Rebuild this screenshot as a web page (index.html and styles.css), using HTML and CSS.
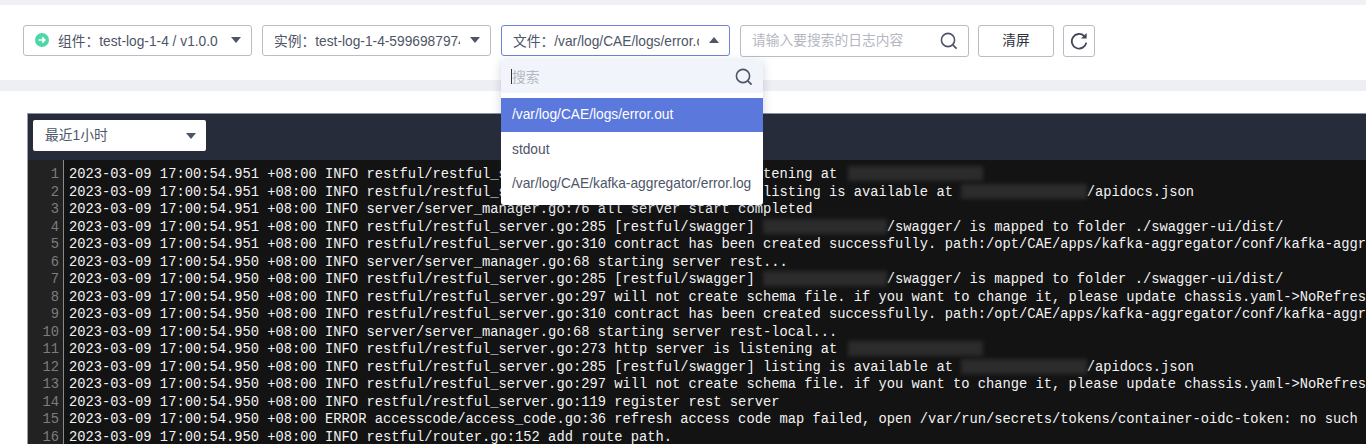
FILE: index.html
```html
<!DOCTYPE html>
<html lang="zh-CN">
<head>
<meta charset="utf-8">
<title>日志</title>
<link rel="stylesheet" href="styles.css">
</head>
<body>
<div class="page">
  <div class="toolbar">
    <div class="select">
      <svg class="status" viewBox="0 0 14 14" width="14" height="14"><circle cx="7" cy="7" r="7" fill="#4fd6a8"/><path d="M3.6 7h6M7.2 4.4 9.8 7l-2.6 2.6" fill="none" stroke="#fff" stroke-width="1.5"/></svg>
      <span class="select-text">组件：test-log-1-4 / v1.0.0</span>
      <span class="caret"></span>
    </div>
    <div class="select">
      <span class="select-text">实例：test-log-1-4-599698797465fc8d9</span>
      <span class="caret"></span>
    </div>
    <div class="select-wrap">
      <div class="select open">
        <span class="select-text">文件：/var/log/CAE/logs/error.out</span>
        <span class="caret up"></span>
      </div>
      <div class="dropdown">
        <div class="dd-search">
          <span class="cursor"></span><span class="dd-placeholder">搜索</span>
          <svg class="search-icon" viewBox="0 0 18 18" width="18" height="18"><circle cx="8" cy="8" r="6.6" fill="none" stroke="#4e5566" stroke-width="1.6"/><path d="m12.8 12.8 3.8 3.8" stroke="#4e5566" stroke-width="1.8"/></svg>
        </div>
        <div class="dd-item active">/var/log/CAE/logs/error.out</div>
        <div class="dd-item">stdout</div>
        <div class="dd-item">/var/log/CAE/kafka-aggregator/error.log</div>
      </div>
    </div>
    <div class="search">
      <span class="placeholder">请输入要搜索的日志内容</span>
      <svg class="search-icon" viewBox="0 0 18 18" width="18" height="18"><circle cx="8" cy="8" r="6.6" fill="none" stroke="#4e5566" stroke-width="1.6"/><path d="m12.8 12.8 3.8 3.8" stroke="#4e5566" stroke-width="1.8"/></svg>
    </div>
    <div class="button"><span class="label">清屏</span></div>
    <div class="button icon">
      <svg viewBox="0 0 18 18" width="18" height="18"><path d="M14.3 4.1A7.3 7.3 0 1 0 16.3 10.6" fill="none" stroke="#3f4657" stroke-width="1.8"/><path d="M16.6 1v5.6H11z" fill="#3f4657"/></svg>
    </div>
  </div>
  <div class="divider"></div>
  <div class="panel">
    <div class="panel-head">
      <div class="range"><span class="label">最近1小时</span><span class="caret"></span></div>
    </div>
    <div class="log">
      <div class="row"><span class="num">1</span><span class="line">2023-03-09 17:00:54.951 +08:00 INFO restful/restful_server.go:273 http server is listening at <i class="mask w1"></i></span></div>
      <div class="row"><span class="num">2</span><span class="line">2023-03-09 17:00:54.951 +08:00 INFO restful/restful_server.go:285 [restful/swagger] listing is available at <i class="mask w2"></i>/apidocs.json</span></div>
      <div class="row"><span class="num">3</span><span class="line">2023-03-09 17:00:54.951 +08:00 INFO server/server_manager.go:76 all server start completed</span></div>
      <div class="row"><span class="num">4</span><span class="line">2023-03-09 17:00:54.951 +08:00 INFO restful/restful_server.go:285 [restful/swagger] <i class="mask w3"></i>/swagger/ is mapped to folder ./swagger-ui/dist/</span></div>
      <div class="row"><span class="num">5</span><span class="line">2023-03-09 17:00:54.951 +08:00 INFO restful/restful_server.go:310 contract has been created successfully. path:/opt/CAE/apps/kafka-aggregator/conf/kafka-aggr</span></div>
      <div class="row"><span class="num">6</span><span class="line">2023-03-09 17:00:54.950 +08:00 INFO server/server_manager.go:68 starting server rest...</span></div>
      <div class="row"><span class="num">7</span><span class="line">2023-03-09 17:00:54.950 +08:00 INFO restful/restful_server.go:285 [restful/swagger] <i class="mask w3"></i>/swagger/ is mapped to folder ./swagger-ui/dist/</span></div>
      <div class="row"><span class="num">8</span><span class="line">2023-03-09 17:00:54.950 +08:00 INFO restful/restful_server.go:297 will not create schema file. if you want to change it, please update chassis.yaml-&gt;NoRefres</span></div>
      <div class="row"><span class="num">9</span><span class="line">2023-03-09 17:00:54.950 +08:00 INFO restful/restful_server.go:310 contract has been created successfully. path:/opt/CAE/apps/kafka-aggregator/conf/kafka-aggr</span></div>
      <div class="row"><span class="num">10</span><span class="line">2023-03-09 17:00:54.950 +08:00 INFO server/server_manager.go:68 starting server rest-local...</span></div>
      <div class="row"><span class="num">11</span><span class="line">2023-03-09 17:00:54.950 +08:00 INFO restful/restful_server.go:273 http server is listening at <i class="mask w1"></i></span></div>
      <div class="row"><span class="num">12</span><span class="line">2023-03-09 17:00:54.950 +08:00 INFO restful/restful_server.go:285 [restful/swagger] listing is available at <i class="mask w2"></i>/apidocs.json</span></div>
      <div class="row"><span class="num">13</span><span class="line">2023-03-09 17:00:54.950 +08:00 INFO restful/restful_server.go:297 will not create schema file. if you want to change it, please update chassis.yaml-&gt;NoRefres</span></div>
      <div class="row"><span class="num">14</span><span class="line">2023-03-09 17:00:54.950 +08:00 INFO restful/restful_server.go:119 register rest server</span></div>
      <div class="row"><span class="num">15</span><span class="line">2023-03-09 17:00:54.950 +08:00 ERROR accesscode/access_code.go:36 refresh access code map failed, open /var/run/secrets/tokens/container-oidc-token: no such</span></div>
      <div class="row"><span class="num">16</span><span class="line">2023-03-09 17:00:54.950 +08:00 INFO restful/router.go:152 add route path.</span></div>
    </div>
  </div>
</div>
</body>
</html>
```
FILE: styles.css
```css
* { box-sizing: border-box; }
html, body { margin: 0; height: 100%; overflow: hidden; background: #fff; }
body { font-family: "Liberation Sans", "Noto Sans CJK SC", sans-serif; font-size: 13.75px; color: #4e5566; }
.page { height: 444px; overflow: hidden; border-top: 5px solid #f0f1f5; }
.toolbar { height: 75px; padding: 20px 0 0 23px; display: flex; align-items: flex-start; gap: 10px; }
.select { width: 229px; height: 31px; padding: 0 9px 2px 11px; border: 1px solid #b9bcc6; border-radius: 3px; display: flex; align-items: center; background: #fff; }
.select.open { border-color: #6d83dd; }
.select-text { flex: 1; min-width: 0; overflow: hidden; white-space: nowrap; margin-right: 10px; }
.status { flex: none; margin-right: 9px; margin-top: 1px; }
.caret { flex: none; width: 0; height: 0; border-left: 5px solid transparent; border-right: 5px solid transparent; border-top: 6px solid #4e5566; margin-right: 1px; }
.caret.up { border-top: 0; border-bottom: 6px solid #4e5566; }
.select-wrap { position: relative; }
.dropdown { position: absolute; z-index: 5; left: 0; top: 35px; width: 262px; height: 145px; background: #fff; border-radius: 3px; box-shadow: 0 2px 10px rgba(40, 50, 80, .22); }
.dd-search { height: 33px; padding: 0 10px; background: #f1f4fb; display: flex; align-items: center; border-radius: 3px 3px 0 0; }
.cursor { width: 1px; height: 15px; background: #333; }
.dd-placeholder { flex: 1; color: #b4b7c2; line-height: 1; padding-top: 2px; }
.dd-item { height: 34.5px; padding: 0 11px; display: flex; align-items: center; white-space: nowrap; color: #4e5566; }
.dd-item.active { margin-top: 5px; height: 34px; padding-bottom: 1px; background: #5b78dc; color: #fff; }
.search { width: 229px; height: 32px; margin-right: -1px; padding: 0 10px 0 11px; border: 1px solid #b9bcc6; border-radius: 3px; display: flex; align-items: center; justify-content: space-between; }
.placeholder { color: #b4b7c2; line-height: 1; }
.button { width: 76px; height: 32px; padding-bottom: 1px; border: 1px solid #b9bcc6; border-radius: 3px; display: flex; align-items: center; justify-content: center; color: #2c3140; }
.label { line-height: 1; }
.button.icon { width: 32px; margin-left: -1px; padding: 0; }
.divider { height: 11px; background: #eeeff4; }
.panel { margin: 22px 0 0 27px; width: 1400px; border-left: 1px solid #9a9ea8; }
.panel-head { height: 47px; background: #272c3b; padding: 7px 0 0 5px; border-top: 1px solid #8c90a0; }
.range { width: 173px; height: 31px; margin-top: -1px; padding: 0 9px 0 12px; background: #fff; border-radius: 2px; display: flex; align-items: center; justify-content: space-between; }
.log { height: 300px; padding-top: 6px; background: linear-gradient(to right, #222 35px, #8a8a8a 35px, #8a8a8a 36px, #131313 36px); font-family: "Liberation Mono", "Noto Sans CJK SC", monospace; font-size: 13.77px; color: #f2f2f2; }
.row { display: flex; height: 17.5px; line-height: 17.5px; }
.num { flex: none; width: 36px; padding-right: 5px; text-align: right; color: #7d7d7d; }
.line { padding-left: 5px; white-space: pre; }
.mask { display: inline-block; height: 15px; vertical-align: -3px; background: #2c2c2c; filter: blur(2px); }
.w1 { width: 135px; margin-left: 2px; }
.w2 { width: 15.2ch; }
.w3 { width: 15ch; }
```
